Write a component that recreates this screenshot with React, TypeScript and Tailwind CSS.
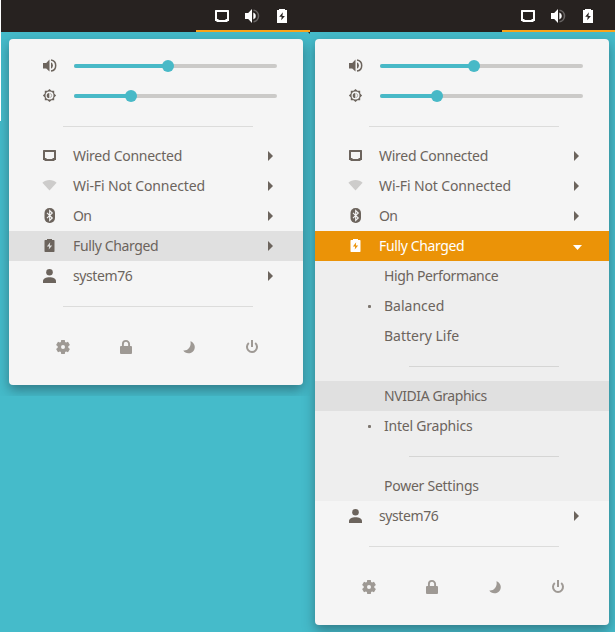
import type { ReactNode } from "react";

function Svg({ children, className = "" }: { children: ReactNode; className?: string }) {
  return (
    <svg viewBox="0 0 16 16" fill="currentColor" className={"block size-4 shrink-0 " + className}>
      {children}
    </svg>
  );
}

const Wired = () => (
  <Svg>
    <path fillRule="evenodd" d="M1.500 2h12l.5.5V12h-1l-1 1H3l-1-1H1V2.500zM3 4v6h1l1 1h5l1-1h1V4z" />
  </Svg>
);
const TopWired = () => (
  <Svg>
    <path fillRule="evenodd" d="M1.500 2h13l.5.5V13h-1l-1 1H3l-1-1H1V2.500zM3 4v7h1l1 1h6l1-1h1V4z" />
  </Svg>
);
const Volume = () => (
  <Svg>
    <path d="M1 5h3.200L7.500 1.500v12L4.200 10.500H1z" />
    <path d="M9 4.300a3.600 3.600 0 0 1 0 6.400z" />
    <path d="M9 1.900c3 .4 4.700 2.900 4.700 5.600S12 12.700 9 13.100" fill="none" stroke="currentColor" strokeWidth="1.500" />
  </Svg>
);
const TopVolume = () => (
  <Svg>
    <path d="M1 5h3.200L8 1v14L4.200 11H1z" />
    <path d="M9.300 4.500a3.700 3.700 0 0 1 0 7z" />
    <path d="M9.500 2.200c3 .4 5 3 5 5.800s-2 5.400-5 5.800" fill="none" stroke="currentColor" strokeWidth="1.600" opacity=".3" />
  </Svg>
);
const Brightness = () => (
  <Svg>
    <path
      fillRule="evenodd"
      d="M7.500.9 9.500 2.800h2.700v2.700l1.900 2-1.900 2v2.700H9.500l-2 1.900-2-1.900H2.800V9.500l-1.900-2 1.900-2V2.800h2.700zM7.500 3.500a4 4 0 1 0 0 8 4 4 0 0 0 0-8z"
    />
    <path d="M7.300 4.900v5.200a2.600 2.600 0 0 1 0-5.200z" />
    <path d="M8.200 5.500a2.100 2.100 0 0 1 0 4" fill="none" stroke="currentColor" strokeWidth=".5" />
  </Svg>
);
const Wifi = () => (
  <Svg className="text-[#cdcccb]">
    <path d="M.4 4.700C2.300 2.900 4.800 2 7.500 2s5.200.9 7.100 2.700L7.500 12.500z" />
  </Svg>
);
const Bluetooth = () => (
  <Svg>
    <rect x="2.500" y="0" width="10.500" height="15" rx="5" />
    <path d="M5 4.800 10.300 10 7.700 12.500V2.500L10.300 5 5 10.200" fill="none" stroke="#f5f5f5" strokeWidth="1.100" />
  </Svg>
);
const Battery = () => (
  <Svg>
    <path fillRule="evenodd" d="M5 1h5v1h2l.5.5V13.500L12 14H3l-.500-.500v-11L3 2h2zM8.200 4.300 4.900 8.400h2.300l-.5 3.200 3.500-4H7.800z" />
  </Svg>
);
const TopBattery = () => (
  <Svg>
    <path fillRule="evenodd" d="M5 1h6v1h2v13H3V2h2zM8.900 4.300 5.200 8.700h2.500l-.5 3.500 3.700-4.300H8.400z" />
  </Svg>
);
const User = () => (
  <Svg>
    <circle cx="7.500" cy="4.300" r="3.300" />
    <path d="M1 15v-1.800C1 10.700 4 9.300 7.500 9.300s6.500 1.400 6.500 3.900V15z" />
  </Svg>
);
const Gear = () => (
  <Svg>
    <path
      fillRule="evenodd"
      d="M6.200 1h3.600l.3 2 1 .6 1.900-.8 1.900 3.100L13.300 7.200v1.600l1.600 1.300-1.900 3.100-1.900-.8-1 .6-.3 2H6.200l-.3-2-1-.6-1.900.8-1.900-3.100 1.600-1.300V7.200L1.100 5.900 3 2.800l1.900.8 1-.6zM8 6a2 2 0 1 0 0 4 2 2 0 0 0 0-4z"
    />
  </Svg>
);
const Lock = () => (
  <Svg>
    <path d="M4.900 7.500V5a3.100 3.100 0 0 1 6.200 0v2.500" fill="none" stroke="currentColor" strokeWidth="1.900" />
    <rect x="2" y="7" width="12" height="8" rx="1" />
  </Svg>
);
const Moon = () => (
  <Svg>
    <path d="M9.400 2.200a6.200 6.200 0 1 1-7.100 9.200C7.300 12 10.600 7 9.400 2.200z" />
  </Svg>
);
const Power = () => (
  <Svg>
    <path d="M4.800 4.100a5 5 0 1 0 6.400 0M8 1v7" fill="none" stroke="currentColor" strokeWidth="2" />
  </Svg>
);
const Arrow = () => (
  <svg viewBox="0 0 5 10" className="ml-auto mr-[30px] block h-[10px] w-[5px]" fill="currentColor">
    <path d="M0 0 5 5 0 10z" />
  </svg>
);
const ArrowDown = () => (
  <svg viewBox="0 0 9 5" className="ml-auto mr-[27px] mt-[3px] block h-[5px] w-[9px]" fill="currentColor">
    <path d="M0 0H9L4.500 5z" />
  </svg>
);

function Slider({ icon, fill }: { icon: ReactNode; fill: string }) {
  return (
    <div className="flex h-[30px] items-center pl-[33px]">
      {icon}
      <div className="ml-4 flex h-1 w-[203px] items-center rounded-full bg-[#cbcac8]">
        <div className={"h-1 rounded-l-full bg-[#48b9c7] " + fill} />
        <div className="-ml-1.5 size-3 rounded-full bg-[#48b9c7]" />
      </div>
    </div>
  );
}

function Row({ icon, label, spacing, state = "" }: { icon: ReactNode; label: string; spacing: string; state?: string }) {
  return (
    <div className={"flex h-[30px] items-center pl-[33px] " + state}>
      {icon}
      <span className={"ml-[15px] whitespace-nowrap " + spacing}>{label}</span>
      {state.includes("text-white") ? <ArrowDown /> : <Arrow />}
    </div>
  );
}

function SubRow({ label, spacing, dot, state = "" }: { label: string; spacing: string; dot?: boolean; state?: string }) {
  return (
    <div className={"flex h-[30px] items-center pl-[53px] " + state}>
      <span className={"mr-[13px] size-[3px] rounded-[1px] " + (dot ? "bg-[#7d766f]" : "")} />
      <span className={"whitespace-nowrap " + spacing}>{label}</span>
    </div>
  );
}

function Divider({ sub }: { sub?: boolean }) {
  return (
    <div className={"flex h-[30px] items-start pr-[50px] pt-[15px] " + (sub ? "pl-[94px]" : "pl-[54px]")}>
      <div className={"h-px w-full " + (sub ? "bg-[#d5d5d4]" : "bg-[#dcdcdb]")} />
    </div>
  );
}

function TopBar({ tray }: { tray: string }) {
  return (
    <div className="flex h-8 justify-end bg-[#272220] text-white">
      <div className={"flex h-8 gap-[14px] border-b-2 border-[#faa41a] pl-[18px] pt-2 " + tray}>
        <TopWired />
        <TopVolume />
        <TopBattery />
      </div>
    </div>
  );
}

function Menu({ open }: { open?: boolean }) {
  return (
    <div className="w-[294px] rounded-[4px] bg-[#f5f5f5] pt-3 text-[#6c645d] shadow-[0_5px_12px_rgba(30,60,70,0.5)]">
      <Slider icon={<Volume />} fill="w-[94px]" />
      <Slider icon={<Brightness />} fill="w-[57px]" />
      <Divider />
      <Row icon={<Wired />} label="Wired Connected" spacing="tracking-[-0.27px]" />
      <Row icon={<Wifi />} label="Wi-Fi Not Connected" spacing="tracking-[-0.12px]" />
      <Row icon={<Bluetooth />} label="On" spacing="tracking-[-0.8px]" />
      <Row
        icon={<Battery />}
        label="Fully Charged"
        spacing="tracking-[-0.36px]"
        state={open ? "bg-[#eb9307] text-white" : "bg-[#e0e0e0]"}
      />
      {open && (
        <div className="bg-[#eeeeee]">
          <SubRow label="High Performance" spacing="tracking-[-0.38px]" />
          <SubRow label="Balanced" spacing="tracking-normal" dot />
          <SubRow label="Battery Life" spacing="tracking-normal" />
          <Divider sub />
          <SubRow label="NVIDIA Graphics" spacing="tracking-[-0.42px]" state="bg-[#e0e0e0]" />
          <SubRow label="Intel Graphics" spacing="tracking-[-0.22px]" dot />
          <Divider sub />
          <SubRow label="Power Settings" spacing="tracking-[-0.25px]" />
        </div>
      )}
      <Row icon={<User />} label="system76" spacing="tracking-[-0.4px]" />
      <Divider />
      <div className="flex h-16 gap-[47px] pl-[46px] pt-[18px] text-[#9e9994]">
        <Gear />
        <Lock />
        <Moon />
        <Power />
      </div>
    </div>
  );
}

export default function App() {
  return (
    <div className="relative flex h-[632px] w-[615px] overflow-hidden bg-[#45bbca] font-['Noto_Sans',sans-serif] text-[14px] leading-[30px]">
      <div className="absolute left-0 top-0 z-10 h-[121px] w-px bg-white" />
      <div className="absolute left-[308px] top-8 z-10 h-[2px] w-[2px] bg-[#272220] [clip-path:polygon(0_0,100%_0,100%_100%)]" />
      <div className="w-[310px]">
        <TopBar tray="pr-5" />
        <div className="h-[364px] overflow-hidden pl-[9px] pt-[7px]">
          <Menu />
        </div>
      </div>
      <div className="w-[305px]">
        <TopBar tray="pr-[19px]" />
        <div className="pl-[5px] pt-[7px]">
          <Menu open />
        </div>
      </div>
    </div>
  );
}
